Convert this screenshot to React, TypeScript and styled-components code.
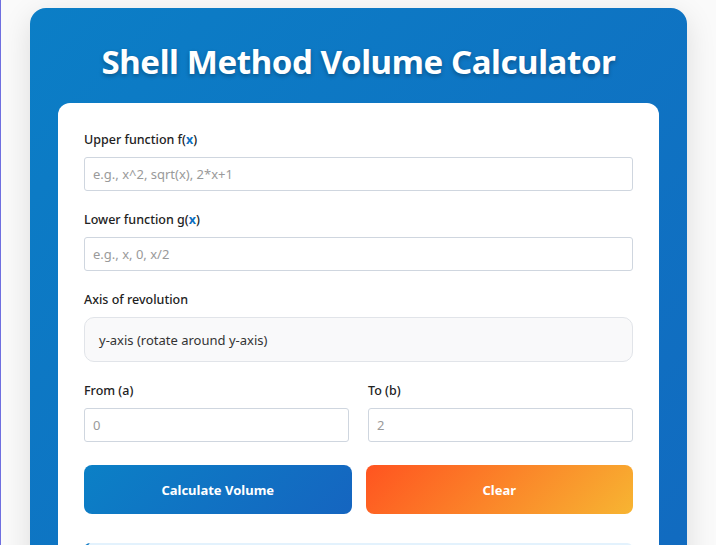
import styled, { createGlobalStyle } from "styled-components";

const GlobalStyle = createGlobalStyle`
  html, body {
    margin: 0;
    padding: 0;
  }
  body {
    background: #fafafa;
    border-left: 1px solid #6f6fe0;
    font-family: "Noto Sans", "Open Sans", sans-serif;
    min-height: 100vh;
    box-sizing: border-box;
  }
  * {
    box-sizing: border-box;
  }
`;

const Page = styled.div`
  padding: 8px 0 40px;
  display: flex;
  justify-content: center;
`;

const Shell = styled.div`
  width: 657px;
  background: linear-gradient(135deg, #0b7ec6 0%, #1268bf 100%);
  border-radius: 16px;
  padding: 0 28px 28px;
  box-shadow: 0 8px 30px rgba(0, 0, 0, 0.12);
`;

const Title = styled.h1`
  margin: 0;
  height: 95px;
  display: flex;
  align-items: center;
  justify-content: center;
  padding-top: 12px;
  color: #fff;
  font-size: 33px;
  font-weight: 700;
  letter-spacing: -0.4px;
  text-shadow: 0 2px 4px rgba(0, 0, 0, 0.3);
`;

const Card = styled.div`
  background: #fff;
  border-radius: 12px;
  padding: 28px 26px 26px;
`;

const Field = styled.div`
  margin-bottom: 20px;
`;

const Label = styled.label`
  display: block;
  font-size: 12.5px;
  line-height: 18px;
  font-weight: 500;
  color: #222;
  margin-bottom: 8px;
`;

const Var = styled.span`
  color: #0e6fc0;
  font-weight: 700;
`;

const Input = styled.input`
  display: block;
  width: 100%;
  height: 34px;
  border: 1px solid #cfd6df;
  border-radius: 3px;
  padding: 0 8px;
  font-family: inherit;
  font-size: 13px;
  color: #333;
  background: #fff;
  outline: none;

  &::placeholder {
    color: #9a9a9a;
  }
`;

const Select = styled.div`
  height: 45px;
  border: 1px solid #e1e4e9;
  border-radius: 10px;
  background: #f9f9fa;
  display: flex;
  align-items: center;
  padding: 0 14px;
  font-size: 13px;
  color: #333;
`;

const Row = styled.div`
  display: grid;
  grid-template-columns: 1fr 1fr;
  gap: 19px;
`;

const Buttons = styled.div`
  display: grid;
  grid-template-columns: 1fr 1fr;
  gap: 14px;
  margin-top: 3px;
  margin-bottom: 29px;
`;

const Button = styled.button<{ $variant: "primary" | "clear" }>`
  height: 49px;
  border: none;
  border-radius: 8px;
  color: #fff;
  font-family: inherit;
  font-size: 13px;
  font-weight: 700;
  cursor: pointer;
  background: ${({ $variant }) =>
    $variant === "primary"
      ? "linear-gradient(135deg, #0b80c6 0%, #1565c0 100%)"
      : "linear-gradient(135deg, #ff5420 0%, #f7b532 100%)"};
`;

const Result = styled.div`
  border-left: 4px solid #0e7ac4;
  background: #e3f2fd;
  border-radius: 6px;
  height: 120px;
`;

export default function App() {
  return (
    <>
      <GlobalStyle />
      <Page>
        <Shell>
          <Title>Shell Method Volume Calculator</Title>
          <Card>
            <Field>
              <Label>
                Upper function f(<Var>x</Var>)
              </Label>
              <Input placeholder="e.g., x^2, sqrt(x), 2*x+1" />
            </Field>
            <Field>
              <Label>
                Lower function g(<Var>x</Var>)
              </Label>
              <Input placeholder="e.g., x, 0, x/2" />
            </Field>
            <Field>
              <Label>Axis of revolution</Label>
              <Select>y-axis (rotate around y-axis)</Select>
            </Field>
            <Row>
              <Field>
                <Label>From (a)</Label>
                <Input placeholder="0" />
              </Field>
              <Field>
                <Label>To (b)</Label>
                <Input placeholder="2" />
              </Field>
            </Row>
            <Buttons>
              <Button $variant="primary">Calculate Volume</Button>
              <Button $variant="clear">Clear</Button>
            </Buttons>
            <Result />
          </Card>
        </Shell>
      </Page>
    </>
  );
}
